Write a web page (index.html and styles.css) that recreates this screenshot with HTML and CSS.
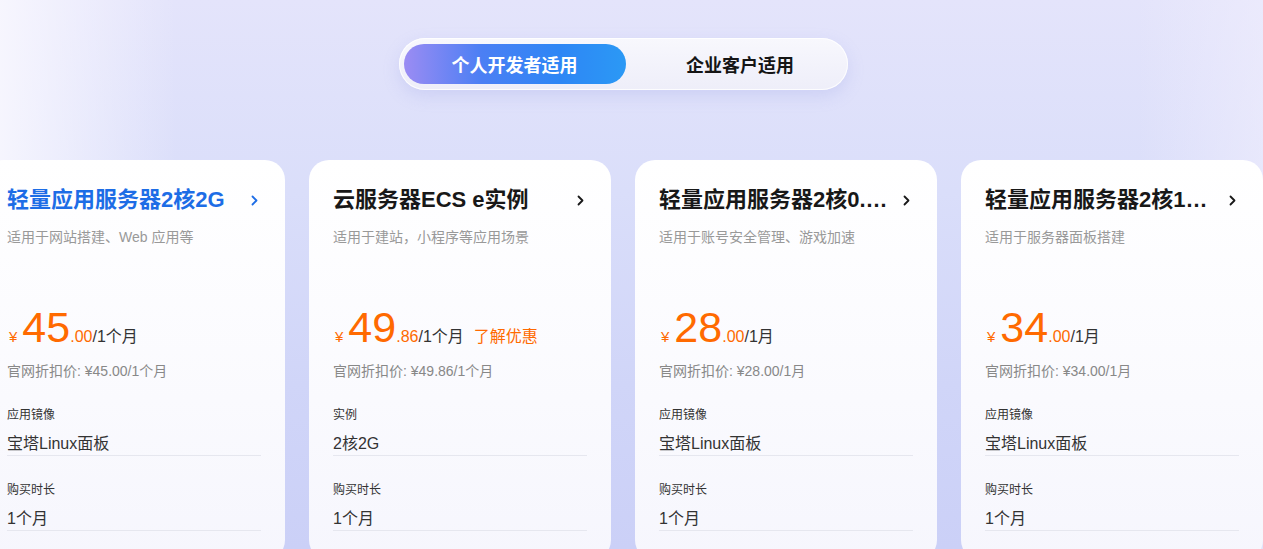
FILE: index.html
```html
<!DOCTYPE html>
<html lang="zh-CN">
  <head>
    <meta charset="UTF-8" />
    <meta name="viewport" content="width=device-width, initial-scale=1.0" />
    <title>云产品特惠</title>
    <link rel="stylesheet" href="styles.css">
  </head>

  <body>
    <section class="offer-section">
      <div class="tab-switch">
        <button class="tab-btn active">个人开发者适用</button>
        <button class="tab-btn">企业客户适用</button>
      </div>

      <div class="card-track">
        <div class="card-row">
          <div class="offer-card hover">
            <div class="card-head">
              <h2 title="轻量应用服务器2核2G">轻量应用服务器2核2G</h2>
              <span class="arrow">
                <svg width="7" height="11" viewBox="0 0 7 11"><path d="M1.5 1.5l4 4-4 4" fill="none" stroke="currentColor" stroke-width="1.8" stroke-linecap="round" stroke-linejoin="round"/></svg>
              </span>
            </div>
            <p class="card-desc">适用于网站搭建、Web 应用等</p>
            <div class="price-row">
              <span class="yen">¥</span><span class="price-int">45</span><span class="price-dec">.00</span><span class="price-unit">/1个月</span>
            </div>
            <p class="price-origin">官网折扣价: ¥45.00/1个月</p>
            <div class="spec">
              <p class="spec-label">应用镜像</p>
              <p class="spec-value">宝塔Linux面板</p>
            </div>
            <div class="spec">
              <p class="spec-label">购买时长</p>
              <p class="spec-value">1个月</p>
            </div>
          </div>

          <div class="offer-card">
            <div class="card-head">
              <h2 title="云服务器ECS e实例">云服务器ECS e实例</h2>
              <span class="arrow">
                <svg width="7" height="11" viewBox="0 0 7 11"><path d="M1.5 1.5l4 4-4 4" fill="none" stroke="currentColor" stroke-width="1.8" stroke-linecap="round" stroke-linejoin="round"/></svg>
              </span>
            </div>
            <p class="card-desc">适用于建站，小程序等应用场景</p>
            <div class="price-row">
              <span class="yen">¥</span><span class="price-int">49</span><span class="price-dec">.86</span><span class="price-unit">/1个月</span>
              <a href="#" class="promo-link">了解优惠</a>
            </div>
            <p class="price-origin">官网折扣价: ¥49.86/1个月</p>
            <div class="spec">
              <p class="spec-label">实例</p>
              <p class="spec-value">2核2G</p>
            </div>
            <div class="spec">
              <p class="spec-label">购买时长</p>
              <p class="spec-value">1个月</p>
            </div>
          </div>

          <div class="offer-card">
            <div class="card-head">
              <h2 title="轻量应用服务器2核0.5G">轻量应用服务器2核0.5G</h2>
              <span class="arrow">
                <svg width="7" height="11" viewBox="0 0 7 11"><path d="M1.5 1.5l4 4-4 4" fill="none" stroke="currentColor" stroke-width="1.8" stroke-linecap="round" stroke-linejoin="round"/></svg>
              </span>
            </div>
            <p class="card-desc">适用于账号安全管理、游戏加速</p>
            <div class="price-row">
              <span class="yen">¥</span><span class="price-int">28</span><span class="price-dec">.00</span><span class="price-unit">/1月</span>
            </div>
            <p class="price-origin">官网折扣价: ¥28.00/1月</p>
            <div class="spec">
              <p class="spec-label">应用镜像</p>
              <p class="spec-value">宝塔Linux面板</p>
            </div>
            <div class="spec">
              <p class="spec-label">购买时长</p>
              <p class="spec-value">1个月</p>
            </div>
          </div>

          <div class="offer-card">
            <div class="card-head">
              <h2 title="轻量应用服务器2核1G2M">轻量应用服务器2核1G2M</h2>
              <span class="arrow">
                <svg width="7" height="11" viewBox="0 0 7 11"><path d="M1.5 1.5l4 4-4 4" fill="none" stroke="currentColor" stroke-width="1.8" stroke-linecap="round" stroke-linejoin="round"/></svg>
              </span>
            </div>
            <p class="card-desc">适用于服务器面板搭建</p>
            <div class="price-row">
              <span class="yen">¥</span><span class="price-int">34</span><span class="price-dec">.00</span><span class="price-unit">/1月</span>
            </div>
            <p class="price-origin">官网折扣价: ¥34.00/1月</p>
            <div class="spec">
              <p class="spec-label">应用镜像</p>
              <p class="spec-value">宝塔Linux面板</p>
            </div>
            <div class="spec">
              <p class="spec-label">购买时长</p>
              <p class="spec-value">1个月</p>
            </div>
          </div>
        </div>
      </div>
    </section>
  </body>
</html>
```

FILE: styles.css
```css
body {
  font-family: "Liberation Sans", "Noto Sans CJK SC", sans-serif;
  margin: 0;
  padding: 0;
  box-sizing: border-box;
  color: #333;
  height: 549px;
  overflow: hidden;
  background:
    linear-gradient(90deg, rgba(250, 249, 255, 0.85) 0%, rgba(250, 249, 255, 0) 14%),
    linear-gradient(270deg, rgba(240, 238, 253, 0.6) 0%, rgba(240, 238, 253, 0) 10%),
    linear-gradient(180deg, #e4e4fb 0%, #dadefa 35%, #d0d5f8 70%, #cbd0f7 100%);
}

p,
h2 {
  margin: 0;
}

.offer-section {
  padding-top: 38px;
}

/* audience switch */
.tab-switch {
  display: flex;
  width: 449px;
  height: 52px;
  margin-left: calc(50% - 233px);
  padding: 6px 5px;
  box-sizing: border-box;
  border-radius: 26px;
  background: linear-gradient(180deg, #f8f8fd, #eeeef9);
  box-shadow: 0 6px 16px rgba(150, 160, 230, 0.25), inset 0 0 0 1px rgba(255, 255, 255, 0.8);
}

.tab-btn {
  flex: 1;
  padding: 0 0 0 12px;
  border: none;
  background: none;
  border-radius: 20px;
  font-family: inherit;
  font-size: 18px;
  font-weight: bold;
  color: #151515;
  cursor: pointer;
}

.tab-btn.active {
  flex: 0 0 222px;
  padding: 0;
  color: #fff;
  background: linear-gradient(90deg, #9b8cf3 0%, #4b7ff4 35%, #2e86f5 70%, #2b99f5 100%);
}

/* product cards */
.card-track {
  margin-top: 70px;
  overflow: hidden;
}

.card-row {
  display: flex;
  gap: 24px;
  margin-left: -17px;
}

.offer-card {
  flex: 0 0 302px;
  height: 400px;
  box-sizing: border-box;
  padding: 26px 24px 0;
  border-radius: 20px;
  background: linear-gradient(180deg, #ffffff 0%, #fafafe 60%, #f6f6fd 100%);
}

.card-head {
  display: flex;
  align-items: center;
  justify-content: space-between;
  padding-right: 3px;
  height: 28px;
}

.card-head h2 {
  max-width: 229px;
  font-size: 22px;
  line-height: 28px;
  font-weight: bold;
  color: #181818;
  white-space: nowrap;
  overflow: hidden;
  text-overflow: ellipsis;
}

.arrow {
  display: flex;
  color: #181818;
}

.offer-card.hover .card-head h2,
.offer-card.hover .arrow {
  color: #1d6de6;
}

.card-desc {
  margin-top: 13px;
  font-size: 14px;
  line-height: 20px;
  color: #999;
}

.price-row {
  display: flex;
  align-items: baseline;
  margin-top: 56px;
  height: 48px;
  color: #ff6a00;
}

.yen {
  font-size: 15px;
  margin: 0 5px 0 2px;
}

.price-int {
  font-size: 43px;
  line-height: 48px;
}

.price-dec {
  font-size: 16px;
}

.price-unit {
  font-size: 16px;
  color: #333;
}

.promo-link {
  margin-left: 10px;
  font-size: 16px;
  color: #ff6a00;
  text-decoration: none;
}

.price-origin {
  margin-top: 10px;
  font-size: 14px;
  line-height: 20px;
  color: #888;
}

.spec {
  margin-top: 25px;
}

.spec + .spec {
  margin-top: 25px;
}

.spec-label {
  font-size: 12px;
  line-height: 18px;
  color: #333;
}

.spec-value {
  margin-top: 9px;
  padding-bottom: 0;
  font-size: 16px;
  line-height: 22px;
  color: #333;
  border-bottom: 1px solid #e6e7ef;
}
```
